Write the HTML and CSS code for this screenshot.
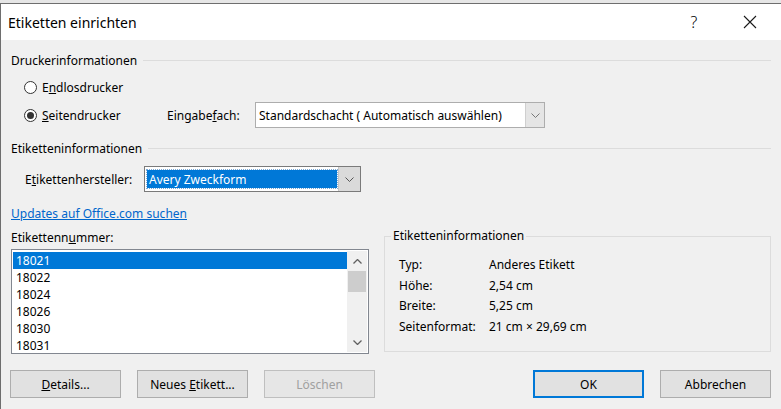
FILE: index.html
```html
<!DOCTYPE html>
<html lang="de">
<head>
    <meta charset="UTF-8">
    <title>Etiketten einrichten</title>
    <link rel="stylesheet" href="styles.css">
</head>
<body>
    <div class="behind"></div>
    <div class="window">
        <div class="titlebar">
            <span class="title">Etiketten einrichten</span>
            <span class="help">?</span>
            <span class="close">
                <svg width="14" height="14" viewBox="0 0 14 14"><path d="M1 1 L13 13 M13 1 L1 13" stroke="#1a1a1a" stroke-width="1.1" fill="none"/></svg>
            </span>
        </div>

        <div class="content">
            <div class="section-head first"><span>Druckerinformationen</span><div class="rule"></div></div>

            <div class="radio-row r1">
                <span class="radio"></span>
                <span>E<u>n</u>dlosdrucker</span>
            </div>
            <div class="radio-row r2">
                <span class="radio checked"></span>
                <span class="radio-text"><u>S</u>eitendrucker</span>
                <span class="field-label tray-label">Eingabe<u>f</u>ach:</span>
                <div class="select tray">
                    <div class="select-value">Standardschacht ( Automatisch auswählen)</div>
                    <div class="select-btn"><svg width="9" height="5" viewBox="0 0 9 5"><path d="M0.5 0.5 L4.5 4.5 L8.5 0.5" stroke="#777" fill="none"/></svg></div>
                </div>
            </div>

            <div class="section-head second"><span>Etiketteninformationen</span><div class="rule"></div></div>

            <div class="maker-row">
                <span class="field-label maker-label">E<u>t</u>ikettenhersteller:</span>
                <div class="select maker">
                    <div class="select-value"><span class="focused">Avery Zweckform</span></div>
                    <div class="select-btn"><svg width="9" height="5" viewBox="0 0 9 5"><path d="M0.5 0.5 L4.5 4.5 L8.5 0.5" stroke="#555" fill="none"/></svg></div>
                </div>
            </div>

            <a class="link" href="#">Updates auf Office.com suchen</a>

            <div class="lower">
                <div class="numbers">
                    <div class="list-label">Etikettenn<u>u</u>mmer:</div>
                    <div class="listbox">
                        <div class="items">
                            <div class="item selected">18021</div>
                            <div class="item">18022</div>
                            <div class="item">18024</div>
                            <div class="item">18026</div>
                            <div class="item">18030</div>
                            <div class="item">18031</div>
                        </div>
                        <div class="scrollbar">
                            <div class="arrow"><svg width="9" height="5" viewBox="0 0 9 5"><path d="M0.5 4.5 L4.5 0.5 L8.5 4.5" stroke="#606060" stroke-width="1.3" fill="none"/></svg></div>
                            <div class="thumb"></div>
                            <div class="track"></div>
                            <div class="arrow"><svg width="9" height="5" viewBox="0 0 9 5"><path d="M0.5 0.5 L4.5 4.5 L8.5 0.5" stroke="#606060" stroke-width="1.3" fill="none"/></svg></div>
                        </div>
                    </div>
                </div>

                <div class="groupbox">
                    <div class="legend">Etiketteninformationen</div>
                    <div class="info">
                        <span>Typ:</span><span>Anderes Etikett</span>
                        <span>Höhe:</span><span>2,54 cm</span>
                        <span>Breite:</span><span>5,25 cm</span>
                        <span>Seitenformat:</span><span>21 cm × 29,69 cm</span>
                    </div>
                </div>
            </div>

            <div class="buttons">
                <button><u>D</u>etails...</button>
                <button>Neues <u>E</u>tikett...</button>
                <button class="disabled">Löschen</button>
                <div class="spacer"></div>
                <button class="default">OK</button>
                <button>Abbrechen</button>
            </div>
        </div>
    </div>
</body>
</html>
```

FILE: styles.css
```css
html, body {
    margin: 0;
    height: 100%;
    overflow: hidden;
}

body {
    background-color: #f0f0f0;
    font-family: "Noto Sans", "Open Sans", sans-serif;
    font-size: 12px;
    color: #000;
}

.behind {
    height: 3px;
    background-color: #e6e6e6;
}

.window {
    border-top: 1px solid #6e6e6e;
    border-left: 1px solid #6e6e6e;
    height: 100%;
}

.titlebar {
    height: 36px;
    background-color: white;
    display: flex;
    align-items: center;
}

.title {
    font-size: 14px;
    margin-left: 7px;
    flex: 1;
}

.help {
    font-size: 16px;
    font-weight: 300;
    width: 20px;
    text-align: center;
    margin-right: 39px;
}

.close {
    width: 14px;
    height: 14px;
    margin-right: 24px;
}

.content {
    padding: 0 10px;
    display: flex;
    flex-direction: column;
}

.section-head {
    height: 16px;
    display: flex;
    align-items: center;
    gap: 6px;
}

.section-head.first { margin-top: 12px; }
.section-head.second { margin-top: 12px; }

.rule {
    flex: 1;
    height: 1px;
    background-color: #dcdcdc;
}

.radio-row {
    display: flex;
    align-items: center;
    padding-left: 13px;
}

.radio-row.r1 {
    height: 18px;
    margin-top: 10px;
}

.radio-row.r2 {
    height: 26px;
    margin-top: 6px;
}

.radio {
    width: 11px;
    height: 11px;
    border: 1px solid #333;
    border-radius: 50%;
    background-color: white;
    margin-right: 5px;
    position: relative;
}

.radio.checked::after {
    content: "";
    position: absolute;
    left: 2px;
    top: 2px;
    width: 7px;
    height: 7px;
    border-radius: 50%;
    background-color: #333;
}

.radio-text { width: 125px; }

.tray-label { width: 88px; }

.select {
    display: flex;
    height: 26px;
    border: 1px solid #adadad;
    background-color: white;
    box-sizing: border-box;
}

.select.tray { width: 290px; }

.select-value {
    flex: 1;
    display: flex;
    align-items: center;
    padding-left: 3px;
}

.select-btn {
    width: 18px;
    display: flex;
    align-items: center;
    justify-content: center;
    background-color: #e5e5e5;
    border-left: 1px solid #cfcfcf;
}

.maker-row {
    display: flex;
    align-items: center;
    height: 26px;
    margin-top: 10px;
    padding-left: 14px;
}

.maker-label { width: 119px; }

.select.maker {
    width: 217px;
    border-color: #7a7a7a;
}

.maker .select-value { padding: 3px 1px 3px 2px; }

.maker .select-btn {
    width: 21px;
    background-color: #dadada;
    border-left-color: #c6c6c6;
}

.focused {
    flex: 1;
    height: 100%;
    display: flex;
    align-items: center;
    padding-left: 2px;
    background-color: #0078d7;
    color: white;
    outline: 1px dotted #7aa9d6;
}

.link {
    color: #0066cc;
    margin-top: 14px;
    height: 16px;
    line-height: 16px;
    align-self: flex-start;
}

.lower {
    display: flex;
    gap: 15px;
    margin-top: 5px;
}

.numbers { width: 358px; }

.list-label {
    height: 16px;
    line-height: 16px;
    margin-top: 3px;
}

.listbox {
    margin-top: 3px;
    height: 105px;
    border: 1px solid #828790;
    box-sizing: border-box;
    background-color: white;
    display: flex;
}

.items {
    flex: 1;
    padding: 2px 0 0 1px;
}

.item {
    height: 17px;
    line-height: 17px;
    padding-left: 3px;
}

.item.selected {
    background-color: #0078d7;
    color: white;
}

.scrollbar {
    width: 20px;
    margin: 1px 1px 1px 0;
    background-color: #f0f0f0;
    display: flex;
    flex-direction: column;
}

.arrow {
    height: 20px;
    display: flex;
    align-items: center;
    justify-content: center;
}

.thumb {
    height: 21px;
    background-color: #cdcdcd;
    margin: 0 1px;
}

.track { flex: 1; }

.groupbox {
    flex: 1;
    height: 116px;
    margin-top: 9px;
    border: 1px solid #dcdcdc;
    box-sizing: border-box;
    position: relative;
}

.legend {
    position: absolute;
    top: -9px;
    left: 6px;
    padding: 0 2px;
    background-color: #f0f0f0;
    line-height: 16px;
}

.info {
    display: grid;
    grid-template-columns: 90px auto;
    grid-auto-rows: 20.7px;
    align-items: center;
    padding: 17px 0 0 14px;
}

.buttons {
    display: flex;
    gap: 16px;
    margin-top: 16px;
    margin-left: -1px;
}

.spacer { flex: 1; }

button {
    width: 111px;
    height: 28px;
    font-family: inherit;
    font-size: 12px;
    background-color: #e1e1e1;
    border: 1px solid #adadad;
    color: #000;
    padding: 0;
}

button.disabled {
    color: #a0a0a0;
    border-color: #bfbfbf;
    background-color: #e6e6e6;
}

button.default {
    border: 2px solid #0078d7;
}
```
